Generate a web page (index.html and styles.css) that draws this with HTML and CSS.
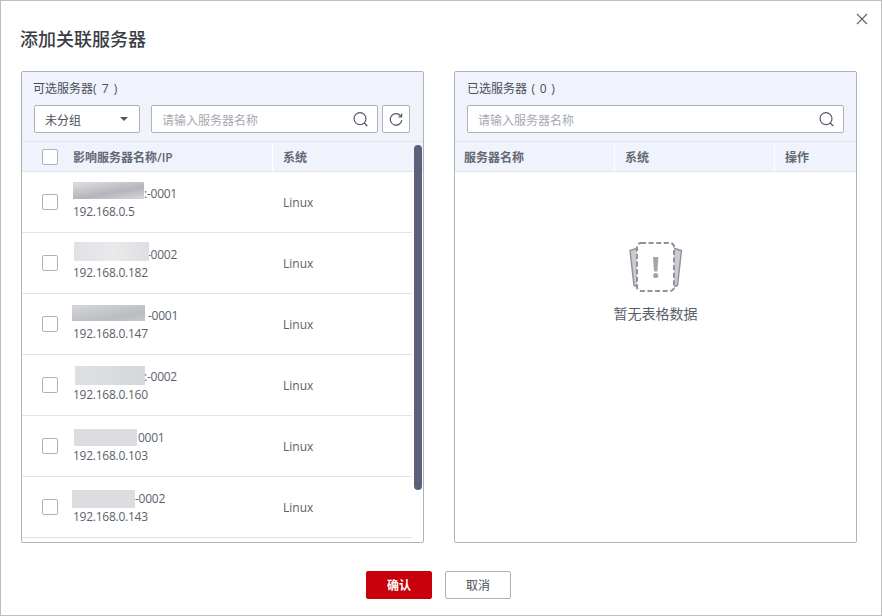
FILE: index.html
```html
<!DOCTYPE html>
<html lang="zh-CN">
<head>
<meta charset="utf-8">
<title>添加关联服务器</title>
<link rel="stylesheet" href="styles.css">
</head>
<body>
<div class="dialog">
  <button class="close" aria-label="关闭">
    <svg width="12" height="12" viewBox="0 0 12 12"><path d="M1 1l10 10M11 1L1 11" stroke="#5c6270" stroke-width="1.1" fill="none"/></svg>
  </button>
  <h1 class="title">添加关联服务器</h1>
  <div class="panels">
    <section class="panel">
      <div class="panel-head">
        <div class="panel-title title-left">可选服务器( 7 )</div>
        <div class="tools">
          <div class="select"><span class="ctl-text">未分组</span><i class="caret"></i></div>
          <div class="search search-left"><span class="ph">请输入服务器名称</span>
            <svg class="mag" width="17" height="17" viewBox="0 0 17 17"><circle cx="8" cy="7.6" r="6" stroke="#555b68" stroke-width="1.2" fill="none"/><path d="M12.3 12l3 3" stroke="#555b68" stroke-width="1.3" fill="none"/></svg>
          </div>
          <button class="refresh" aria-label="刷新">
            <svg width="16" height="16" viewBox="0 0 16 16"><path d="M12.9 5.2A5.8 5.8 0 1 0 13.8 9" stroke="#555b68" stroke-width="1.2" fill="none"/><path d="M13.6 2.6v3.2h-3.2" stroke="#555b68" stroke-width="1.2" fill="none"/></svg>
          </button>
        </div>
      </div>
      <div class="thead thead-left">
        <div class="cb-cell"><span class="cb"></span></div>
        <div class="th th-name">影响服务器名称/IP</div>
        <div class="th th-sys">系统</div>
      </div>
      <div class="tbody">
        <div class="row">
          <div class="cb-cell"><span class="cb"></span></div>
          <div class="name-cell"><div class="name"><span class="blur b1"></span>:-0001</div><div>192.168.0.5</div></div>
          <div class="sys">Linux</div>
        </div>
        <div class="row">
          <div class="cb-cell"><span class="cb"></span></div>
          <div class="name-cell"><div class="name"><span class="blur b2"></span>-0002</div><div>192.168.0.182</div></div>
          <div class="sys">Linux</div>
        </div>
        <div class="row">
          <div class="cb-cell"><span class="cb"></span></div>
          <div class="name-cell"><div class="name"><span class="blur b3"></span>-0001</div><div>192.168.0.147</div></div>
          <div class="sys">Linux</div>
        </div>
        <div class="row">
          <div class="cb-cell"><span class="cb"></span></div>
          <div class="name-cell"><div class="name"><span class="blur b4"></span>:-0002</div><div>192.168.0.160</div></div>
          <div class="sys">Linux</div>
        </div>
        <div class="row">
          <div class="cb-cell"><span class="cb"></span></div>
          <div class="name-cell"><div class="name"><span class="blur b5"></span>0001</div><div>192.168.0.103</div></div>
          <div class="sys">Linux</div>
        </div>
        <div class="row">
          <div class="cb-cell"><span class="cb"></span></div>
          <div class="name-cell"><div class="name"><span class="blur b6"></span>-0002</div><div>192.168.0.143</div></div>
          <div class="sys">Linux</div>
        </div>
      </div>
      <div class="scrollbar"></div>
    </section>
    <section class="panel">
      <div class="panel-head">
        <div class="panel-title">已选服务器 ( 0 )</div>
        <div class="tools">
          <div class="search search-right"><span class="ph">请输入服务器名称</span>
            <svg class="mag" width="17" height="17" viewBox="0 0 17 17"><circle cx="8" cy="7.6" r="6" stroke="#555b68" stroke-width="1.2" fill="none"/><path d="M12.3 12l3 3" stroke="#555b68" stroke-width="1.3" fill="none"/></svg>
          </div>
        </div>
      </div>
      <div class="thead thead-right">
        <div class="th th-r1">服务器名称</div>
        <div class="th th-r2">系统</div>
        <div class="th th-r3">操作</div>
      </div>
      <div class="empty">
        <svg width="54" height="50" viewBox="0 0 54 50">
          <path d="M9 6L1 8.5 5 43.5 9 45Z" fill="#c9cbd0" stroke="#8f9298" stroke-width="1.4"/>
          <path d="M44 6L52.5 8.5 48.5 43.5 44 45Z" fill="#c9cbd0" stroke="#8f9298" stroke-width="1.4"/>
          <rect x="8" y="1" width="37" height="48" rx="4" fill="#fff" stroke="#8f9298" stroke-width="2" stroke-dasharray="5 2.6"/>
          <path d="M24 15h5.4l-1 14.5h-3.4z" fill="#a3a5aa"/>
          <circle cx="26.7" cy="33.5" r="2.6" fill="#a3a5aa"/>
        </svg>
        <div class="empty-text">暂无表格数据</div>
      </div>
    </section>
  </div>
  <div class="footer">
    <button class="btn btn-primary">确认</button>
    <button class="btn">取消</button>
  </div>
</div>
</body>
</html>
```
FILE: styles.css
```css
* { box-sizing: border-box; }
html, body { margin: 0; padding: 0; }
body {
  width: 882px;
  height: 616px;
  overflow: hidden;
  background: #fff;
  font-family: "Open Sans", "Noto Sans CJK SC", sans-serif;
  font-size: 12px;
  color: #5a5f6c;
}
.dialog {
  position: relative;
  width: 882px;
  height: 616px;
  border: 1px solid #bdbdbd;
  padding: 0 24px 0 20px;
  display: flex;
  flex-direction: column;
  background: #fff;
}
.close {
  position: absolute;
  top: 12px;
  right: 13px;
  width: 12px;
  height: 12px;
  padding: 0;
  border: 0;
  background: none;
  display: flex;
}
.title {
  margin: 25px 0 0 -1px;
  height: 26px;
  line-height: 26px;
  font-size: 18px;
  font-weight: 500;
  color: #3a3d45;
}
.panels {
  margin-top: 19px;
  display: flex;
  gap: 30px;
  height: 472px;
}
.panel {
  position: relative;
  width: 403px;
  height: 472px;
  border: 1px solid #aeb2bf;
  border-radius: 2px;
  overflow: hidden;
  background: #fff;
}
.panel-head {
  height: 70px;
  padding: 8px 12px 0 12px;
  background: #f0f3fb;
  border-bottom: 1px solid #e2e5ee;
}
.panel-title {
  height: 18px;
  line-height: 18px;
  color: #4a4e59;
  word-spacing: 1.5px;
}
.title-left { margin-left: -1px; word-spacing: 2px; }
.tools {
  margin-top: 7px;
  display: flex;
}
.select {
  width: 106px;
  height: 28px;
  padding: 0 11px 0 10px;
  border: 1px solid #aeb2bf;
  border-radius: 2px;
  background: #fff;
  display: flex;
  align-items: center;
  justify-content: space-between;
  color: #4a4e59;
}
.ctl-text, .ph { padding-top: 1px; }
.caret {
  width: 0;
  height: 0;
  border-left: 4px solid transparent;
  border-right: 4px solid transparent;
  border-top: 4px solid #4f5462;
}
.search {
  height: 28px;
  padding: 0 8px 0 10px;
  border: 1px solid #aeb2bf;
  border-radius: 2px;
  background: #fff;
  display: flex;
  align-items: center;
  justify-content: space-between;
}
.search-left { width: 227px; margin-left: 11px; }
.search-right { width: 377px; }
.ph { color: #a6a9b1; }
.mag { flex: none; }
.refresh {
  width: 28px;
  height: 28px;
  margin-left: 4px;
  padding: 0;
  border: 1px solid #aeb2bf;
  border-radius: 2px;
  background: #fff;
  display: flex;
  align-items: center;
  justify-content: center;
}
.thead {
  height: 30px;
  display: flex;
  align-items: stretch;
  background: #f0f3fb;
  border-bottom: 1px solid #e2e5ee;
}
.th {
  line-height: 32px;
  font-weight: 600;
  color: #636773;
}
.cb-cell {
  width: 51px;
  padding-left: 20px;
  display: flex;
  align-items: center;
  flex: none;
}
.cb {
  width: 16px;
  height: 16px;
  border: 1px solid #aeb2bf;
  border-radius: 2px;
  background: #fff;
}
.th-name {
  width: 200px;
  border-right: 1px solid #fff;
}
.th-sys { padding-left: 10px; }
.th-r1 { width: 160px; padding-left: 9px; border-right: 1px solid #fff; }
.th-r2 { width: 160px; padding-left: 10px; border-right: 1px solid #fff; }
.th-r3 { padding-left: 10px; }
.tbody { width: 390px; }
.row {
  height: 61px;
  display: flex;
  align-items: center;
  border-bottom: 1px solid #e2e4ec;
}
.name-cell {
  width: 210px;
  padding-top: 2px;
  line-height: 18px;
  letter-spacing: -0.25px;
  color: #5a5f6c;
}
.name { display: flex; align-items: flex-start; height: 18px; }
.blur {
  display: block;
  flex: none;
  filter: blur(0.6px);
}
.b1 { width: 71px; height: 17px; margin: -3px 0 0 0; background: linear-gradient(170deg, #d8d9dc 10%, #b4b5ba 60%, #d6d7da); }
.b2 { width: 75px; height: 19px; margin: -4px -2px 0 1px; background: linear-gradient(90deg, #e0e1e4, #e9eaec 50%, #dedfe2); }
.b3 { width: 73px; height: 16px; margin: -2px 3px 0 -1px; background: linear-gradient(170deg, #d6d7da, #bbbcc2 70%, #c8c9ce); }
.b4 { width: 70px; height: 19px; margin: -2px -1px 0 2px; background: linear-gradient(90deg, #dfe0e3, #d6d7db); }
.b5 { width: 63px; height: 17px; margin: 0 1px 0 1px; background: #dcdde0; }
.b6 { width: 63px; height: 18px; margin: 0 0 0 -1px; background: #dcdde0; }
.sys { padding-left: 0; }
.scrollbar {
  position: absolute;
  top: 73px;
  right: 1px;
  width: 8px;
  height: 345px;
  border-radius: 4px;
  background: #5c6078;
}
.empty {
  padding-top: 70px;
  display: flex;
  flex-direction: column;
  align-items: center;
}
.empty-text {
  margin-top: 12px;
  line-height: 20px;
  font-size: 14px;
  color: #5a5f6c;
}
.footer {
  margin-top: 28px;
  padding-left: 345px;
  display: flex;
  gap: 13px;
}
.btn {
  width: 66px;
  height: 28px;
  padding: 0;
  border: 1px solid #aeb2bf;
  border-radius: 2px;
  background: #fff;
  font: inherit;
  color: #4a4e59;
}
.btn-primary {
  border-color: #c7000b;
  background: #c7000b;
  color: #fff;
  font-weight: 600;
}
```
